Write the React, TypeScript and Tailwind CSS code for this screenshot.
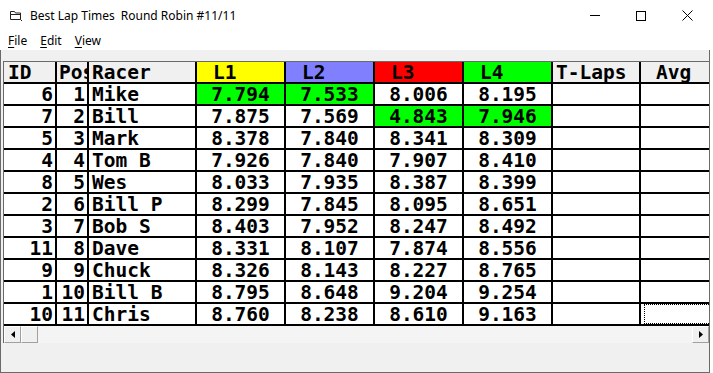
import React from "react";

const COLS = [
  { name: "ID", w: 53, head: "", hp: "pl-[4px]", align: "right" },
  { name: "Pos", w: 32, head: "", hp: "pl-[2px]", align: "right" },
  { name: "Racer", w: 108, head: "", hp: "pl-[3px]", align: "left" },
  { name: "L1", w: 89, head: "bg-[#ffff00]", hp: "pl-[16px]", align: "center" },
  { name: "L2", w: 89, head: "bg-[#8080ff]", hp: "pl-[16px]", align: "center" },
  { name: "L3", w: 89, head: "bg-[#ff0000]", hp: "pl-[16px]", align: "center" },
  { name: "L4", w: 89, head: "bg-[#00ff00]", hp: "pl-[16px]", align: "center" },
  { name: "T-Laps", w: 88, head: "", hp: "pl-[3px]", align: "left" },
  { name: "Avg", w: 110, head: "", hp: "pl-[15px]", align: "left" },
];

const ROWS: { cells: string[]; best: number[] }[] = [
  { cells: ["6", "1", "Mike", "7.794", "7.533", "8.006", "8.195"], best: [3, 4] },
  { cells: ["7", "2", "Bill", "7.875", "7.569", "4.843", "7.946"], best: [5, 6] },
  { cells: ["5", "3", "Mark", "8.378", "7.840", "8.341", "8.309"], best: [] },
  { cells: ["4", "4", "Tom B", "7.926", "7.840", "7.907", "8.410"], best: [] },
  { cells: ["8", "5", "Wes", "8.033", "7.935", "8.387", "8.399"], best: [] },
  { cells: ["2", "6", "Bill P", "8.299", "7.845", "8.095", "8.651"], best: [] },
  { cells: ["3", "7", "Bob S", "8.403", "7.952", "8.247", "8.492"], best: [] },
  { cells: ["11", "8", "Dave", "8.331", "8.107", "7.874", "8.556"], best: [] },
  { cells: ["9", "9", "Chuck", "8.326", "8.143", "8.227", "8.765"], best: [] },
  { cells: ["1", "10", "Bill B", "8.795", "8.648", "9.204", "9.254"], best: [] },
  { cells: ["10", "11", "Chris", "8.760", "8.238", "8.610", "9.163"], best: [] },
];

function AppIcon() {
  return (
    <svg width="14" height="13" viewBox="0 0 14 13" className="shrink-0">
      <path d="M1.5 2.5h4l1 1.5h5v6.5h-10z" fill="none" stroke="#222" strokeWidth="1" />
      <path d="M1.5 5.5h10" stroke="#222" strokeWidth="1" />
      <path d="M11.5 10.5l1.5 1.5" stroke="#222" strokeWidth="1" />
    </svg>
  );
}

function TitleBar() {
  return (
    <div className="h-[31px] flex items-center bg-white font-['Noto_Sans','Open_Sans',sans-serif] text-[12px] text-black">
      <div className="pl-[9px] pr-[7px] flex items-center">
        <AppIcon />
      </div>
      <span>Best Lap Times</span>
      <span className="ml-[6px]">Round Robin #11/11</span>
      <div className="ml-auto flex items-center h-full">
        <div className="w-[46px] h-full flex items-center justify-center">
          <div className="w-[10px] h-px bg-black" />
        </div>
        <div className="w-[46px] h-full flex items-center justify-center">
          <div className="w-[10px] h-[10px] border border-black" />
        </div>
        <div className="w-[46px] h-full flex items-center justify-center">
          <svg width="11" height="11" viewBox="0 0 11 11">
            <path d="M0.5 0.5l10 10M10.5 0.5l-10 10" stroke="#000" strokeWidth="1" />
          </svg>
        </div>
      </div>
    </div>
  );
}

function MenuBar() {
  const items = [
    { k: "F", rest: "ile" },
    { k: "E", rest: "dit" },
    { k: "V", rest: "iew" },
  ];
  return (
    <div className="h-[19px] flex items-center bg-white font-['Noto_Sans','Open_Sans',sans-serif] text-[12px] text-black pl-[8px] gap-[13px]">
      {items.map((it) => (
        <span key={it.k}>
          <span className="underline underline-offset-2">{it.k}</span>
          {it.rest}
        </span>
      ))}
    </div>
  );
}

function HeaderRow() {
  return (
    <div className="flex h-[22px] border-b-2 border-black">
      {COLS.map((c) => (
        <div
          key={c.name}
          style={{ width: c.w }}
          className={`shrink-0 h-full border-r-2 border-black whitespace-nowrap pt-[2px] leading-[18px] ${c.name === "Pos" ? "overflow-hidden" : ""} ${c.hp} ${c.head || "bg-[#f0f0f0]"}`}
        >
          {c.name}
        </div>
      ))}
    </div>
  );
}

function DataRow({ cells, best, last }: { cells: string[]; best: number[]; last: boolean }) {
  return (
    <div className="flex h-[22px] border-b-2 border-black">
      {COLS.map((c, i) => {
        const v = cells[i] ?? "";
        const align =
          c.align === "right" ? "text-right pr-[2px]" : c.align === "center" ? "text-center" : "text-left pl-[3px]";
        const bg = best.includes(i) ? "bg-[#00ff00]" : "bg-white";
        const focus = last && i === 8;
        return (
          <div
            key={c.name}
            style={{ width: c.w }}
            className={`shrink-0 h-full border-r-2 border-black whitespace-nowrap leading-[18px] ${focus ? "" : "pt-[2px]"} ${align} ${bg}`}
          >
            {focus ? <div className="h-full border border-dotted border-black" /> : v}
          </div>
        );
      })}
    </div>
  );
}

function ScrollBar() {
  return (
    <div className="h-[17px] flex bg-[#f4f4f4]">
      <div className="w-[17px] h-full bg-[#f0f0f0] border-t border-l border-white border-r border-b border-r-[#a0a0a0] border-b-[#a0a0a0] flex items-center justify-center">
        <svg width="4" height="7" viewBox="0 0 4 7">
          <path d="M4 0L0 3.5L4 7z" fill="#000" />
        </svg>
      </div>
      <div className="w-[17px] h-full bg-[#f0f0f0] border-t border-l border-white border-r border-b border-r-[#a0a0a0] border-b-[#a0a0a0]" />
      <div className="flex-1" />
      <div className="w-[17px] h-full bg-[#f0f0f0] border-t border-l border-white border-r border-b border-r-[#a0a0a0] border-b-[#a0a0a0] flex items-center justify-center">
        <svg width="4" height="7" viewBox="0 0 4 7">
          <path d="M0 0L4 3.5L0 7z" fill="#000" />
        </svg>
      </div>
    </div>
  );
}

export default function App() {
  return (
    <div className="w-[713px] h-[373px] bg-white overflow-hidden">
      <div className="w-[710px] h-[373px] flex flex-col">
        <TitleBar />
        <MenuBar />
        <div className="flex-1 bg-[#f0f0f0] border-l border-r border-b border-[#6a6a6a] pt-[11px] pl-[2px] flex flex-col">
          <div className="border-t border-l border-[#696969] overflow-hidden font-['DejaVu_Sans_Mono',monospace] font-bold text-[19.5px] text-black">
            <HeaderRow />
            {ROWS.map((r, i) => (
              <DataRow key={i} cells={r.cells} best={r.best} last={i === ROWS.length - 1} />
            ))}
            <ScrollBar />
          </div>
        </div>
      </div>
    </div>
  );
}
